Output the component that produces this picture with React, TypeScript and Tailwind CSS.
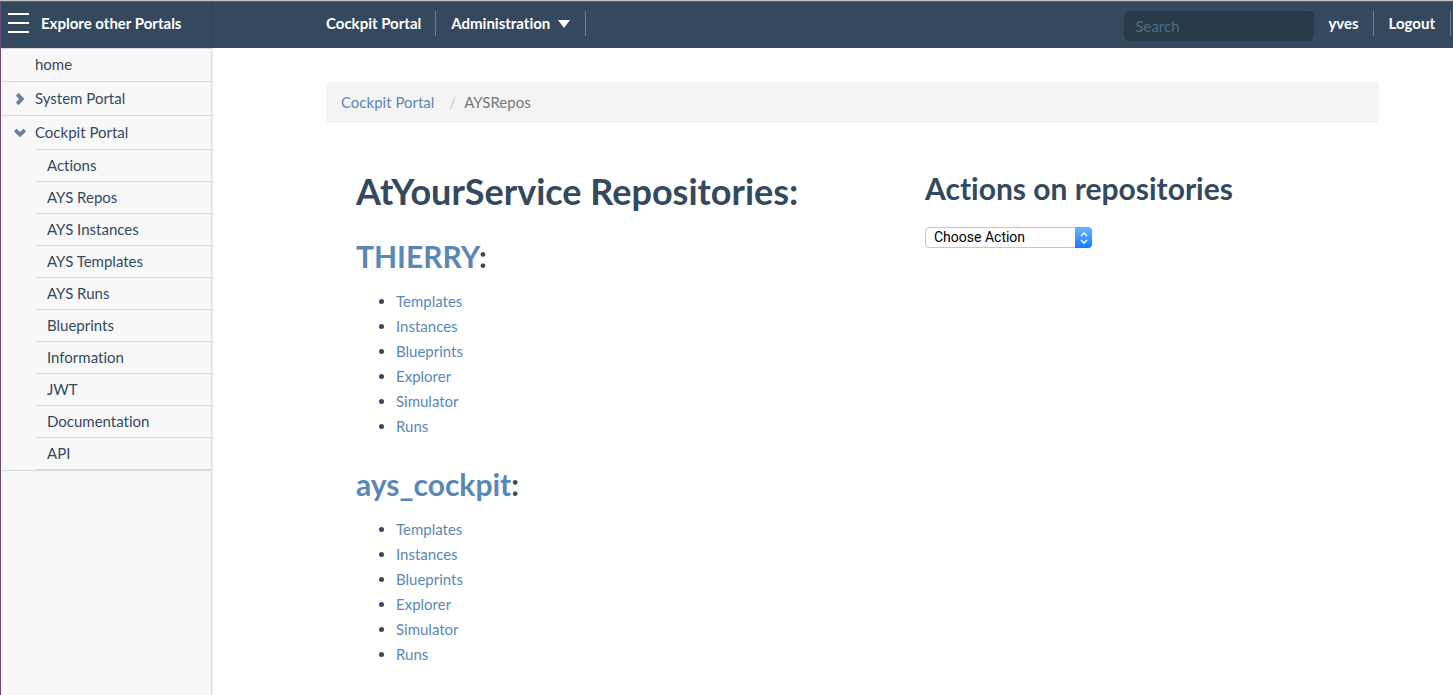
import React from "react";

const portalPages = [
  "Actions",
  "AYS Repos",
  "AYS Instances",
  "AYS Templates",
  "AYS Runs",
  "Blueprints",
  "Information",
  "JWT",
  "Documentation",
  "API",
];

const repositories = ["THIERRY", "ays_cockpit"];
const repositoryLinks = ["Templates", "Instances", "Blueprints", "Explorer", "Simulator", "Runs"];

function Chevron({ open }: { open: boolean }) {
  return (
    <svg className="h-3 w-3" viewBox="0 0 12 12" aria-hidden="true">
      <path
        d={open ? "M1.2 3 L6 7.6 L10.8 3" : "M3.2 1.2 L7.8 6 L3.2 10.8"}
        fill="none"
        stroke="#6b7f9c"
        strokeWidth="3.8"
      />
    </svg>
  );
}

function Sidebar() {
  return (
    <nav
      aria-label="Portals"
      className="w-[212px] shrink-0 border-l border-r border-l-[#6b4a80] border-r-[#dddddd] bg-[#f8f8f8] pl-px text-[#34495e] shadow-[1px_0_2px_rgba(0,0,0,0.08)]"
    >
      <ul className="border-b border-[#d3dae1]">
        <li className="border-t border-[#d5d9de]">
          <a href="#home" className="block h-8 pl-[33px] leading-[30px]">home</a>
        </li>
        <li className="flex h-[34px] items-center border-t border-[#d5d9de] pl-3">
          <Chevron open={false} />
          <a href="#system" className="pl-[9px]">System Portal</a>
        </li>
        <li className="border-t border-[#d5d9de]">
          <div className="flex h-[33px] items-center pl-3">
            <Chevron open />
            <a href="#cockpit" className="pl-[9px]">Cockpit Portal</a>
          </div>
          <ul className="ml-[34px] border-b border-[#d3dae1]">
            {portalPages.map((page) => (
              <li key={page} className="h-8 border-t border-[#d5d9de]">
                <a href="#page" className="block pl-[11px] leading-[31px]">{page}</a>
              </li>
            ))}
          </ul>
        </li>
      </ul>
    </nav>
  );
}

function Header() {
  return (
    <header className="flex h-12 border-t border-[#c4c4c0] bg-[#34495e] font-bold text-white">
      <div className="flex w-[212px] shrink-0 items-start gap-3 border-l border-r border-t border-l-[#6b4a80] border-r-[#2d4256] border-t-[#5a6468] pl-[7px]">
        <button type="button" aria-label="Toggle menu" className="mt-[11px] flex w-[21px] flex-col gap-[7px]">
          <span className="h-0.5 w-full bg-white" />
          <span className="h-0.5 w-full bg-white" />
          <span className="h-0.5 w-full bg-white" />
        </button>
        <a href="#portals" className="mt-[9px] leading-6">Explore other Portals</a>
      </div>
      <div className="flex grow items-start border-t border-[#5a6468] pl-[99px] pt-[9px]">
        <a href="#cockpit" className="border-r border-[#6f7b86] pl-[15px] pr-3.5 leading-[25px]">Cockpit Portal</a>
        <button type="button" className="flex items-center gap-2 border-r border-[#6f7b86] px-[15px] leading-[25px]">
          Administration
          <svg className="h-2 w-3" viewBox="0 0 12 8" aria-hidden="true">
            <path d="M0 0H12L6 8Z" fill="white" />
          </svg>
        </button>
        <input
          type="search"
          aria-label="Search"
          placeholder="Search"
          className="ml-auto h-[30px] w-[190px] rounded-md bg-[#293a4a] px-[11px] font-normal text-white outline-none placeholder:text-[#4f6a85]"
        />
        <a href="#user" className="border-r border-[#6f7b86] px-3.5 leading-[25px]">yves</a>
        <a href="#logout" className="mr-0.5 border-r border-[#6f7b86] px-[15px] leading-[25px]">Logout</a>
      </div>
    </header>
  );
}

function Repository({ name }: { name: string }) {
  return (
    <section className="mb-[25px]">
      <h2 className="mb-[13px] text-[30px] font-bold leading-10">
        <a href="#repository" className="text-[#5b87b5]">{name}</a>:
      </h2>
      <ul className="list-disc pl-10">
        {repositoryLinks.map((link) => (
          <li key={link} className="leading-[25px]">
            <a href="#repository" className="text-[#5b87b5]">{link}</a>
          </li>
        ))}
      </ul>
    </section>
  );
}

export default function App() {
  return (
    <div className="flex min-h-screen flex-col bg-white font-['Lato','Liberation_Sans',sans-serif] text-[15px] text-[#34495e] [font-variant-ligatures:none]">
      <Header />
      <div className="flex grow">
        <Sidebar />
        <main className="grow pl-[114px] pr-[74px] pt-[34px]">
          <nav aria-label="Breadcrumb" className="flex h-[41px] items-center rounded bg-[#f4f4f4] px-[15px]">
            <a href="#cockpit" className="text-[#5b87b5]">Cockpit Portal</a>
            <span className="pl-[15px] pr-2 text-[#cccccc]">/</span>
            <span className="text-[#777777]">AYSRepos</span>
          </nav>
          <div className="grid grid-cols-[569fr_454fr] pl-[30px] pt-11">
            <div>
              <h1 className="mb-[21px] text-4xl font-bold leading-12">AtYourService Repositories:</h1>
              {repositories.map((name) => (
                <Repository key={name} name={name} />
              ))}
            </div>
            <section>
              <h2 className="mb-[18px] text-3xl font-bold leading-[42px]">Actions on repositories</h2>
              <div className="relative w-[167px]">
                <select
                  aria-label="Choose Action"
                  className="block h-[21px] w-full appearance-none rounded border border-[#c6c6c6] bg-white pl-2 font-['Roboto','Liberation_Sans',sans-serif] text-sm leading-[19px] text-black"
                >
                  <option>Choose Action</option>
                </select>
                <span className="pointer-events-none absolute right-0 top-0 flex h-[21px] w-[17px] items-center justify-center rounded-r bg-linear-to-b from-[#6cb3fa] to-[#0a7aff]">
                  <svg className="h-3 w-2" viewBox="0 0 8 12" aria-hidden="true">
                    <path d="M1 4L4 1L7 4M1 8L4 11L7 8" fill="none" stroke="white" strokeWidth="1.4" />
                  </svg>
                </span>
              </div>
            </section>
          </div>
        </main>
      </div>
    </div>
  );
}
